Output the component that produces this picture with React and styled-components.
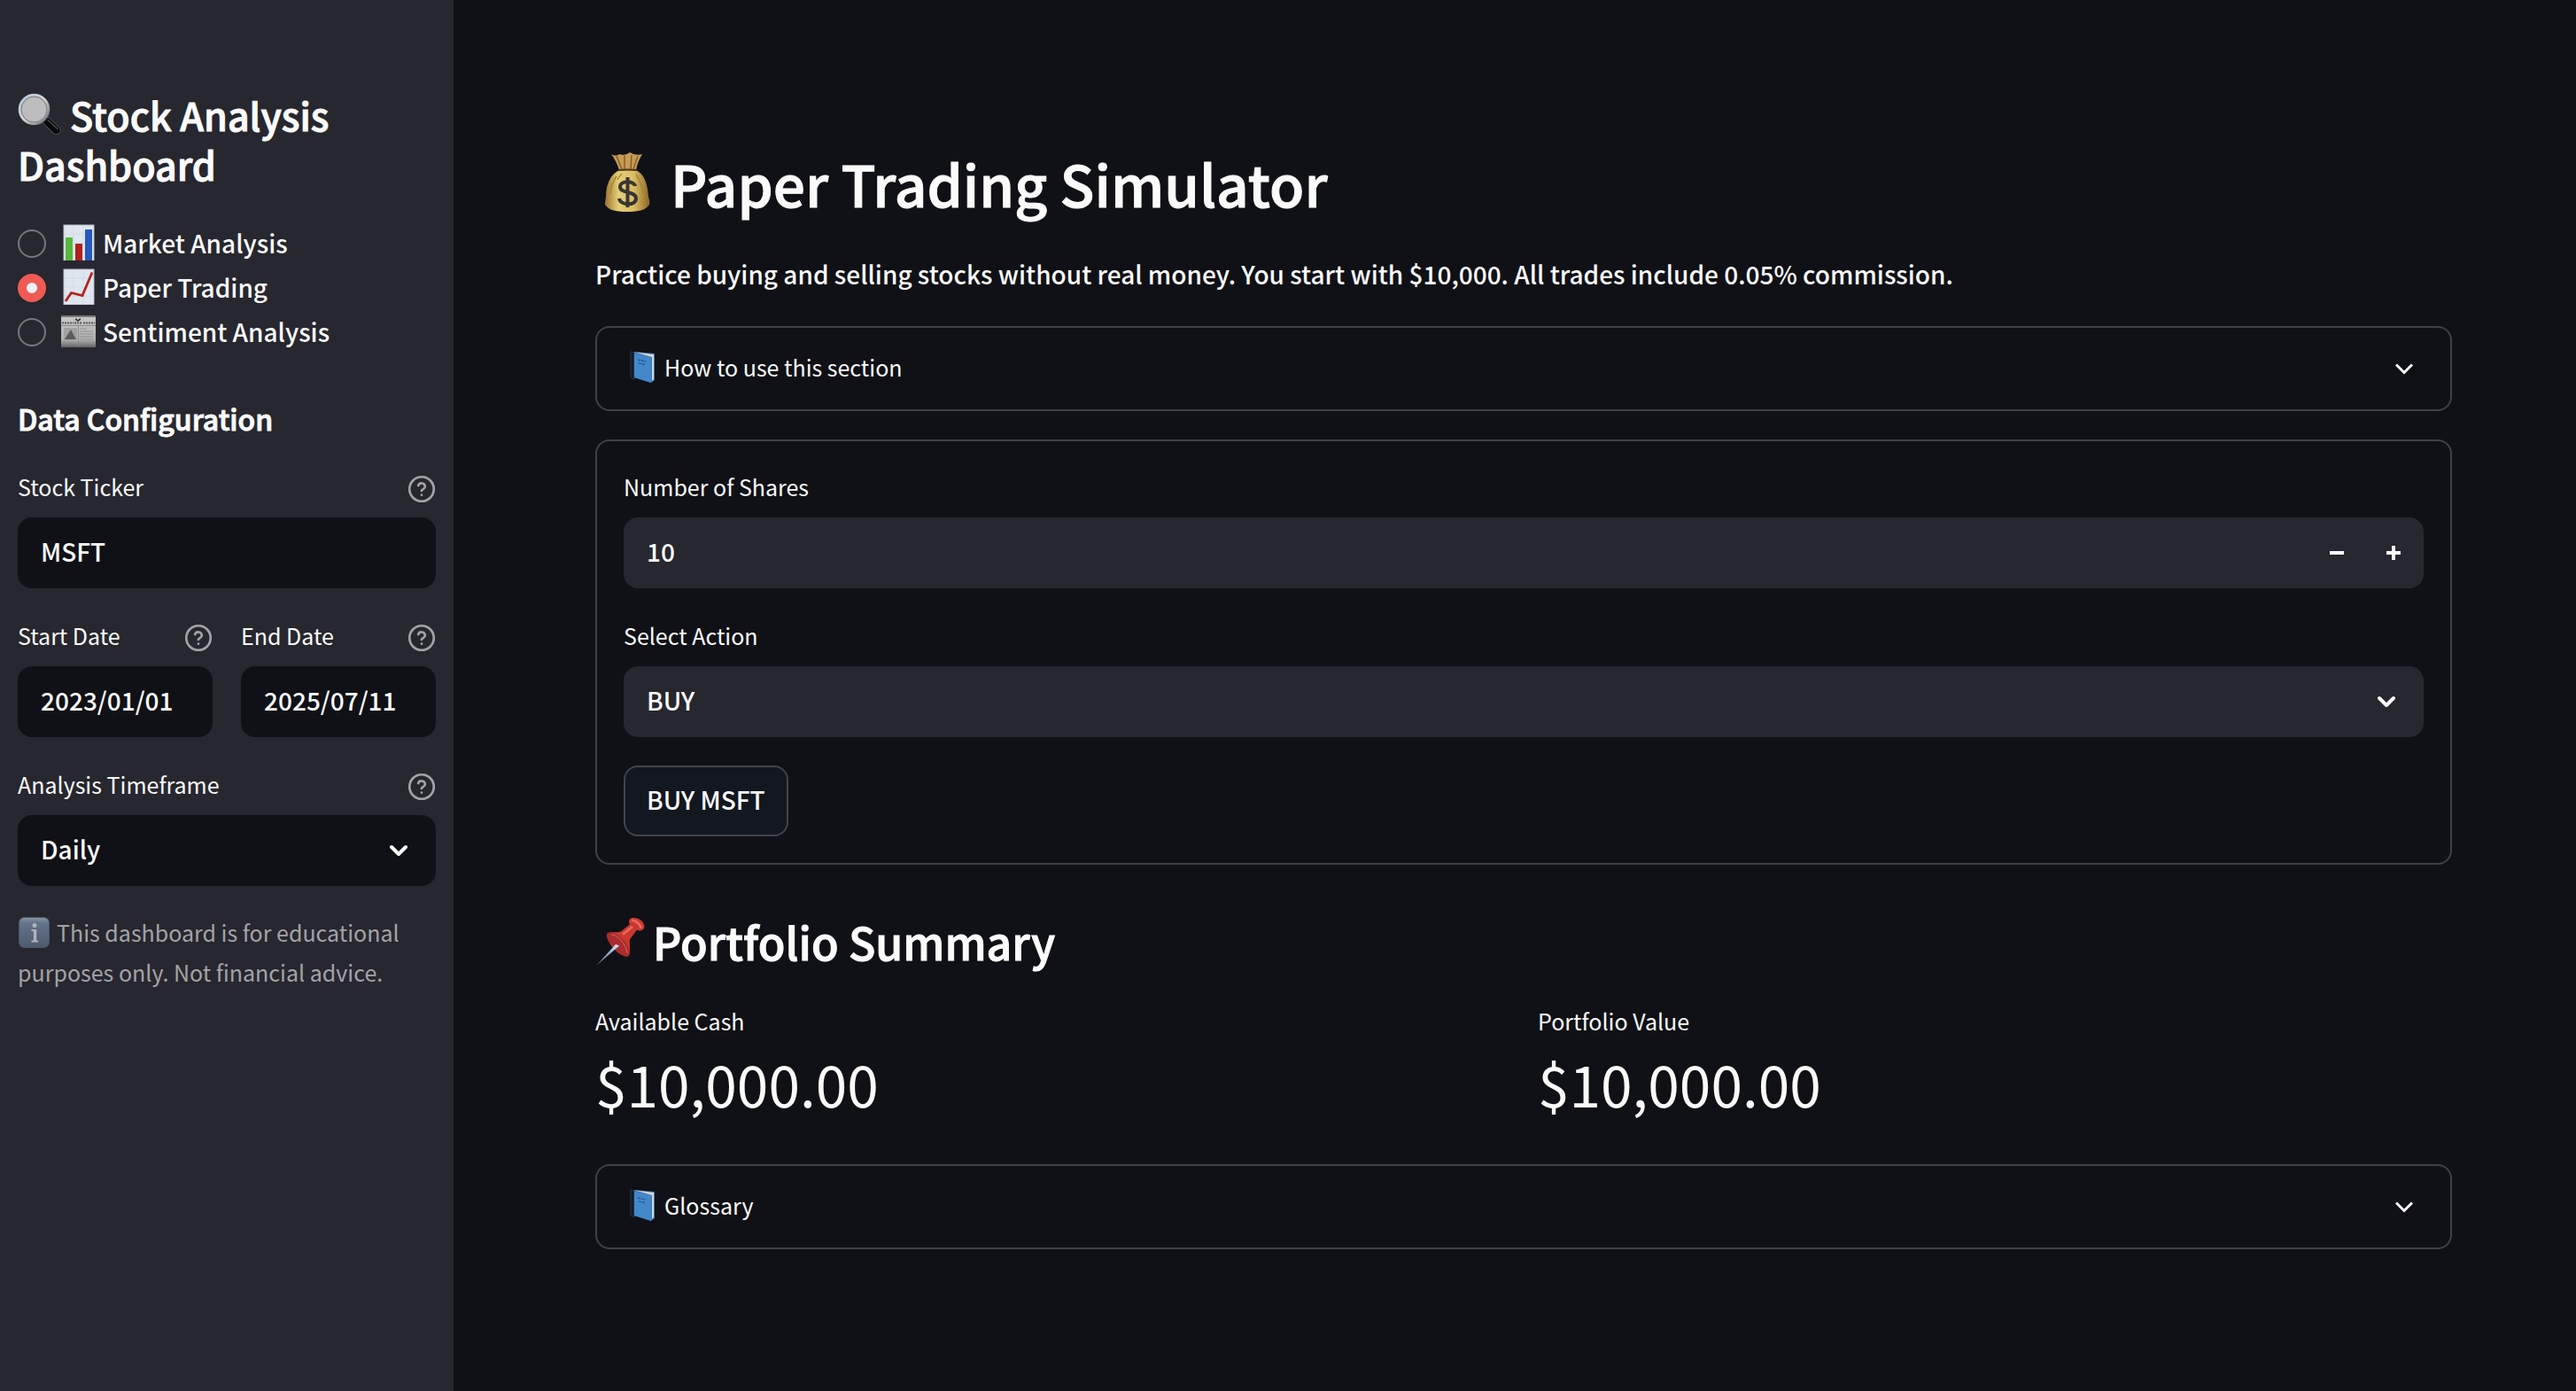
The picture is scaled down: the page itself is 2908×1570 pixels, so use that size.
import React, { useState } from "react";
import styled, { createGlobalStyle } from "styled-components";

const color = {
  page: "#101116",
  panel: "#27272f",
  text: "#fafafa",
  muted: "#a3a3a7",
  line: "#404145",
  accent: "#f05a54",
};

const GlobalStyle = createGlobalStyle`
  *, *::before, *::after { box-sizing: border-box; }
  body {
    margin: 0;
    background: ${color.page};
    color: ${color.text};
    font-family: "Noto Sans CJK SC", "Noto Sans", sans-serif;
    font-size: 28px;
    font-weight: 500;
    line-height: 50px;
  }
  h1, h2, h3, p, dl, dd, fieldset { margin: 0; }
  button, input, select { font: inherit; color: inherit; }
`;

const Layout = styled.div`
  display: grid;
  grid-template-columns: 512px minmax(0, 1fr);
  min-height: 100vh;
`;

const Sidebar = styled.aside`
  display: flex;
  flex-direction: column;
  padding: 101px 20px 60px;
  background: ${color.panel};
`;

const SidebarTitle = styled.h2`
  font-size: 43px;
  line-height: 56px;
  font-weight: 500;
  -webkit-text-stroke: 1px ${color.text};
`;

const SidebarHeading = styled.h3`
  margin: 46px 0 30px;
  font-size: 32px;
  line-height: 52px;
  font-weight: 500;
  -webkit-text-stroke: 1px ${color.text};
`;

const NavList = styled.fieldset`
  display: flex;
  flex-direction: column;
  margin-top: 37px;
  padding: 0;
  border: 0;
`;

const NavOption = styled.label`
  display: flex;
  align-items: center;
  gap: 16px;
  height: 50px;
  cursor: pointer;
`;

const Radio = styled.input`
  appearance: none;
  flex: none;
  width: 32px;
  height: 32px;
  margin: 0;
  border: 2px solid #77777c;
  border-radius: 50%;

  &:checked {
    border: 10px solid ${color.accent};
    background: #f0f2f6;
  }
`;

const NavText = styled.span`
  display: flex;
  align-items: center;
  gap: 7px;
  padding-bottom: 3px;
  line-height: 46px;
`;

const Picture = styled.svg`
  flex: none;
  display: inline-block;
  width: ${(p) => p.$w}px;
  height: ${(p) => p.$h || p.$w}px;
  vertical-align: ${(p) => p.$drop || 0}px;
  margin-right: ${(p) => p.$gap || 0}px;
`;

const Fields = styled.div`
  display: flex;
  flex-direction: column;
  gap: 32px;
`;

const FieldPair = styled.div`
  display: grid;
  grid-template-columns: 1fr 1fr;
  gap: 32px;
`;

const Field = styled.div`
  display: flex;
  flex-direction: column;
  gap: 8px;
  min-width: 0;
`;

const FieldHead = styled.div`
  display: flex;
  align-items: center;
  justify-content: space-between;
  height: 48px;
`;

const FieldLabel = styled.label`
  padding-bottom: 6px;
  font-size: 25px;
  font-weight: 400;
  line-height: 42px;
`;

const HelpButton = styled.button`
  display: flex;
  padding: 0;
  border: 0;
  background: none;
  color: ${color.muted};
`;

const ControlBox = styled.div`
  display: flex;
  align-items: center;
  position: relative;
  height: 80px;
  border-radius: 16px;
  background: ${(p) => (p.$dark ? color.page : color.panel)};
`;

const TextInput = styled.input`
  flex: 1;
  min-width: 0;
  height: 100%;
  padding: 0 26px 5px;
  border: 0;
  outline: 0;
  background: none;
`;

const Select = styled.select`
  appearance: none;
  width: 100%;
  height: 100%;
  padding: 0 80px 5px 26px;
  border: 0;
  outline: 0;
  background: none;
`;

const SelectArrow = styled.span`
  position: absolute;
  right: 32px;
  top: 30px;
  display: flex;
  pointer-events: none;
`;

const StepButton = styled.button`
  display: flex;
  align-items: center;
  justify-content: center;
  width: 64px;
  height: 100%;
  padding: 0;
  border: 0;
  background: none;

  &:last-child { margin-right: 2px; }
`;

const Caption = styled.p`
  margin-top: 30px;
  font-size: 25px;
  font-weight: 400;
  line-height: 45px;
  color: ${color.muted};
`;

const Main = styled.main`
  display: flex;
  flex-direction: column;
  padding: 160px 140px 160px 160px;
`;

const PageTitle = styled.h1`
  font-size: 64px;
  line-height: 92px;
  font-weight: 500;
  -webkit-text-stroke: 1px ${color.text};
`;

const Intro = styled.p`
  margin: 32px 0 34px;
`;

const SectionTitle = styled.h2`
  margin-top: 48px;
  font-size: 50px;
  line-height: 76px;
  font-weight: 500;
  -webkit-text-stroke: 1px ${color.text};
`;

const Expander = styled.button`
  display: flex;
  align-items: center;
  justify-content: space-between;
  height: 96px;
  padding: 0 42px 0 36px;
  border: 2px solid ${color.line};
  border-radius: 16px;
  background: none;
  font-size: 25px;
  font-weight: 400;
  line-height: 42px;
`;

const ExpanderLabel = styled.span`
  display: flex;
  align-items: center;
  gap: 8px;
  padding-bottom: 4px;
`;

const TradeForm = styled.form`
  display: flex;
  flex-direction: column;
  gap: 32px;
  margin-top: 32px;
  padding: 30px;
  border: 2px solid ${color.line};
  border-radius: 16px;
`;

const SubmitButton = styled.button`
  align-self: flex-start;
  height: 80px;
  padding: 0 24px 5px;
  border: 2px solid #41444c;
  border-radius: 16px;
  background: #131720;
`;

const Metrics = styled.dl`
  display: grid;
  grid-template-columns: 1fr 1fr;
  gap: 32px;
  margin: 32px 0 42px;
`;

const MetricLabel = styled.dt`
  font-size: 25px;
  font-weight: 400;
  line-height: 40px;
`;

const MetricValue = styled.dd`
  font-size: 64px;
  font-weight: 400;
  line-height: 100px;
`;

const Magnifier = () => (
  <Picture $w={50} $gap={9} $drop={-7} viewBox="0 0 50 50" aria-hidden="true">
    <defs>
      <linearGradient id="rim" x1="0" y1="0" x2="1" y2="1">
        <stop offset="0" stopColor="#a9c4e4" />
        <stop offset=".5" stopColor="#d8d8d8" />
        <stop offset="1" stopColor="#5b5b5d" />
      </linearGradient>
    </defs>
    <path d="M33 32 L43.500 42" stroke="#5d5f63" strokeWidth="10" strokeLinecap="round" />
    <path d="M33 32 L43.500 42" stroke="#08090b" strokeWidth="8.600" strokeLinecap="round" />
    <path d="M34 30.500 L45 40.500" stroke="#4b4d51" strokeWidth="1.500" strokeLinecap="round" />
    <circle cx="18.500" cy="18.500" r="16.500" fill="#bdbdc0" stroke="url(#rim)" strokeWidth="2.500" />
    <circle cx="18.500" cy="18.500" r="14.500" fill="none" stroke="#75777b" strokeWidth="1" />
  </Picture>
);

const BarChart = () => (
  <Picture $w={41} viewBox="0 0 41 41" aria-hidden="true">
    <rect x="4" y="1" width="34" height="40" fill="#dfe6ef" stroke="#b9c0cb" />
    <path d="M4 11H38M4 21H38M4 31H38M15 1V41M26 1V41" stroke="#ccd6e3" strokeWidth=".6" />
    <rect x="6" y="15" width="8" height="26" fill="#55b83b" />
    <rect x="17" y="22" width="8" height="19" fill="#b0221b" />
    <rect x="28" y="6" width="8" height="35" fill="#2857bd" />
  </Picture>
);

const LineChart = () => (
  <Picture $w={41} viewBox="0 0 41 41" aria-hidden="true">
    <rect x="4" y="1" width="34" height="40" fill="#dfe6ef" stroke="#b9c0cb" />
    <path d="M4 11H38M4 21H38M4 31H38M15 1V41M26 1V41" stroke="#ccd6e3" strokeWidth=".6" />
    <path d="M6 37 L12.500 27.500 L25 30.500 L36 4.500" fill="none" stroke="#b3231c" strokeWidth="2.800" />
  </Picture>
);

const Newspaper = () => (
  <Picture $w={41} viewBox="0 0 41 41" aria-hidden="true">
    <defs>
      <linearGradient id="paper" x1="0" y1="0" x2="0" y2="1">
        <stop offset="0" stopColor="#c9c9c9" />
        <stop offset=".75" stopColor="#b2b2b2" />
        <stop offset="1" stopColor="#636363" />
      </linearGradient>
    </defs>
    <rect x="1" y="3" width="39" height="36" fill="url(#paper)" />
    <path d="M1 4H40" stroke="#77777a" strokeWidth="2" />
    <path d="M17 6l3 2 3-2v2l-3 2-3-2z" fill="#333" />
    <path d="M2 11.500H15M26 11.500H39M16 11.500H25" stroke="#555" strokeWidth="2" strokeDasharray="2 1" />
    <path d="M1 14.500H40" stroke="#888" />
    <rect x="4" y="17" width="15" height="14" fill="#a2a2a2" />
    <path d="M5 30L10 22l2-3 2 4 4 7z" fill="#5c5c5c" />
    <path d="M22 18H30M22 21H37M22 24H37M22 27H37M22 30H37M4 34H19M22 34H37" stroke="#929292" />
    <path d="M20.500 15V38" stroke="#8d8d8d" />
  </Picture>
);

const InfoBadge = () => (
  <Picture $w={37} $gap={7} $drop={-8} viewBox="0 0 37 37" aria-hidden="true">
    <defs>
      <linearGradient id="info" x1="0" y1="0" x2="0" y2="1">
        <stop offset="0" stopColor="#8b94a3" />
        <stop offset=".2" stopColor="#627389" />
        <stop offset="1" stopColor="#4d5b6d" />
      </linearGradient>
    </defs>
    <rect x="1.500" y="1.500" width="34" height="34" rx="6" fill="url(#info)" stroke="#46576d" />
    <circle cx="19" cy="10.500" r="2.500" fill="#b1b3b8" />
    <path d="M15.500 16H19.500V28M15.500 28.500H23" fill="none" stroke="#b1b3b8" strokeWidth="2" />
    <path d="M19.500 15V29" stroke="#b1b3b8" strokeWidth="3.400" />
  </Picture>
);

const MoneyBag = () => (
  <Picture $w={72} $gap={13} $drop={-8} viewBox="0 0 72 72" aria-hidden="true">
    <defs>
      <linearGradient id="sack" x1="0" y1="0" x2="1" y2="0">
        <stop offset="0" stopColor="#9a7430" />
        <stop offset=".3" stopColor="#e6cf78" />
        <stop offset=".65" stopColor="#d9bd62" />
        <stop offset="1" stopColor="#8d6526" />
      </linearGradient>
    </defs>
    <path d="M18 4 Q23 7 27 4 Q34 6 39 2 Q45 6 53 4 Q48 12 46 22 H27 Q24 12 18 4Z" fill="#c79b55" />
    <path d="M24 6 L30 21M33 5V21M41 5L40 21M48 6L43 21" stroke="#875f2c" strokeWidth="1.500" />
    <path d="M27 22 H46 C56 27 59 38 60 52 Q62 58 61 61 C57 67 50 69 36 69 C22 69 15 67 11 61 Q11 57 12 52 C12 38 17 27 27 22Z" fill="url(#sack)" />
    <path d="M26 22 Q36 21 47 22" fill="none" stroke="#4d3318" strokeWidth="2" />
    <path d="M24 29Q18 37 17 49M30 26Q27 29 25 33M46 27Q53 37 54 50" fill="none" stroke="#a98539" strokeWidth="1.500" />
    <path d="M45 40C44 34 28 33 28 41C28 49 46 45 46 54C46 63 28 62 27 54M36.500 30V64" fill="none" stroke="#393532" strokeWidth="4" />
  </Picture>
);

const Pushpin = () => (
  <Picture $w={57} $h={56} $gap={8} $drop={-7} viewBox="0 0 57 62" preserveAspectRatio="none" aria-hidden="true">
    <defs>
      <linearGradient id="needle" x1="1" y1="0" x2="0" y2="1">
        <stop offset="0" stopColor="#d4ecff" />
        <stop offset=".5" stopColor="#88a5bd" />
        <stop offset="1" stopColor="#777" />
      </linearGradient>
    </defs>
    <path d="M14 20 C19 18 26 20 29 18 L39 9 C36 4 40 0 45 1 C52 2 57 9 55 14 C53 17 50 18 47 16 L39 28 C38 33 41 43 37 49 C28 52 9 28 14 20Z" fill="#c93830" />
    <path d="M14 20 C19 17 30 24 35 33 C40 42 40 47 37 49 C28 52 9 28 14 20Z" fill="#a92d2c" />
    <path d="M18 22C25 22 35 34 36 45" fill="none" stroke="#df6961" />
    <path d="M31 22L42 12M41 4Q49 5 52 14" fill="none" stroke="#ea665b" strokeWidth="3" />
    <path d="M27 36 L23 34 L1 61 Z" fill="url(#needle)" />
  </Picture>
);

const Book = () => (
  <Picture $w={32} $h={36} viewBox="0 0 32 36" aria-hidden="true">
    <path d="M2 1 L6 2 L6 32 L2 30Z" fill="#111c2b" stroke="#27384d" />
    <path d="M6 1 L29 3 V33 L25 36 L6 30Z" fill="#3c79b6" />
    <path d="M7 1.500 L28 4 V32 L26 34 V7Z" fill="#d8d6ce" />
    <path d="M6 3 L25 7 V36 L6 30Z" fill="#4388ca" />
    <path d="M10 10L19 12M11 14L18 15.500" stroke="#29568a" strokeWidth="1.500" strokeDasharray="3 1" />
  </Picture>
);

const HelpIcon = () => (
  <Picture $w={32} viewBox="0 0 24 24" fill="none" stroke="currentColor" strokeWidth="2" strokeLinecap="round" strokeLinejoin="round" aria-hidden="true">
    <circle cx="12" cy="12" r="10.300" />
    <path d="M9.100 9a3 3 0 0 1 5.800 1c0 2-3 2.500-3 3.500M12 17h.01" />
  </Picture>
);

const Chevron = ({ sharp }) => (
  <Picture $w={20} viewBox="0 0 20 20" fill="none" stroke="currentColor" strokeWidth={sharp ? 3 : 4} strokeLinecap={sharp ? "butt" : "round"} strokeLinejoin={sharp ? "miter" : "round"} aria-hidden="true">
    <path d={sharp ? "M1 5.500 L10 14.500 L19 5.500" : "M2 6 L10 14 L18 6"} />
  </Picture>
);

const StepIcon = ({ plus }) => (
  <Picture $w={16} viewBox="0 0 16 16" fill="currentColor" aria-hidden="true">
    <path d={plus ? "M0 6H6V0H10V6H16V10H10V16H6V10H0Z" : "M0 6H16V10H0Z"} />
  </Picture>
);

const LabelledField = ({ id, label, help, children }) => (
  <Field>
    <FieldHead>
      <FieldLabel htmlFor={id}>{label}</FieldLabel>
      {help && (
        <HelpButton type="button" aria-label={`Help for ${label}`}>
          <HelpIcon />
        </HelpButton>
      )}
    </FieldHead>
    {children}
  </Field>
);

const TextField = ({ id, label, initial }) => (
  <LabelledField id={id} label={label} help>
    <ControlBox $dark>
      <TextInput id={id} type="text" defaultValue={initial} />
    </ControlBox>
  </LabelledField>
);

const SelectField = ({ id, label, help, dark, options }) => (
  <LabelledField id={id} label={label} help={help}>
    <ControlBox $dark={dark}>
      <Select id={id}>
        {options.map((o) => (
          <option key={o}>{o}</option>
        ))}
      </Select>
      <SelectArrow>
        <Chevron />
      </SelectArrow>
    </ControlBox>
  </LabelledField>
);

const ExpanderRow = ({ children }) => (
  <Expander type="button" aria-expanded="false">
    <ExpanderLabel>
      <Book />
      {children}
    </ExpanderLabel>
    <Chevron sharp />
  </Expander>
);

const pages = [
  { name: "Market Analysis", Icon: BarChart },
  { name: "Paper Trading", Icon: LineChart },
  { name: "Sentiment Analysis", Icon: Newspaper },
];

const metrics = [
  { label: "Available Cash", value: "$10,000.00" },
  { label: "Portfolio Value", value: "$10,000.00" },
];

export default function App() {
  const [page, setPage] = useState("Paper Trading");
  const [shares, setShares] = useState(10);

  return (
    <>
      <GlobalStyle />
      <Layout>
        <Sidebar>
          <SidebarTitle>
            <Magnifier />
            Stock Analysis Dashboard
          </SidebarTitle>
          <NavList aria-label="Section">
            {pages.map(({ name, Icon }) => (
              <NavOption key={name}>
                <Radio type="radio" name="page" checked={page === name} onChange={() => setPage(name)} />
                <NavText>
                  <Icon />
                  {name}
                </NavText>
              </NavOption>
            ))}
          </NavList>
          <SidebarHeading>Data Configuration</SidebarHeading>
          <Fields>
            <TextField id="ticker" label="Stock Ticker" initial="MSFT" />
            <FieldPair>
              <TextField id="start" label="Start Date" initial="2023/01/01" />
              <TextField id="end" label="End Date" initial="2025/07/11" />
            </FieldPair>
            <SelectField id="timeframe" label="Analysis Timeframe" help dark options={["Daily", "Weekly", "Monthly"]} />
          </Fields>
          <Caption>
            <InfoBadge />
            This dashboard is for educational purposes only. Not financial advice.
          </Caption>
        </Sidebar>
        <Main>
          <PageTitle>
            <MoneyBag />
            Paper Trading Simulator
          </PageTitle>
          <Intro>
            Practice buying and selling stocks without real money. You start with $10,000. All trades include 0.05% commission.
          </Intro>
          <ExpanderRow>How to use this section</ExpanderRow>
          <TradeForm onSubmit={(e) => e.preventDefault()}>
            <LabelledField id="shares" label="Number of Shares">
              <ControlBox>
                <TextInput id="shares" type="text" inputMode="numeric" value={shares} onChange={(e) => setShares(Number(e.target.value) || 0)} />
                <StepButton type="button" aria-label="Decrease shares" onClick={() => setShares(Math.max(1, shares - 1))}>
                  <StepIcon />
                </StepButton>
                <StepButton type="button" aria-label="Increase shares" onClick={() => setShares(shares + 1)}>
                  <StepIcon plus />
                </StepButton>
              </ControlBox>
            </LabelledField>
            <SelectField id="action" label="Select Action" options={["BUY", "SELL"]} />
            <SubmitButton type="submit">BUY MSFT</SubmitButton>
          </TradeForm>
          <SectionTitle>
            <Pushpin />
            Portfolio Summary
          </SectionTitle>
          <Metrics>
            {metrics.map((m) => (
              <div key={m.label}>
                <MetricLabel>{m.label}</MetricLabel>
                <MetricValue>{m.value}</MetricValue>
              </div>
            ))}
          </Metrics>
          <ExpanderRow>Glossary</ExpanderRow>
        </Main>
      </Layout>
    </>
  );
}
